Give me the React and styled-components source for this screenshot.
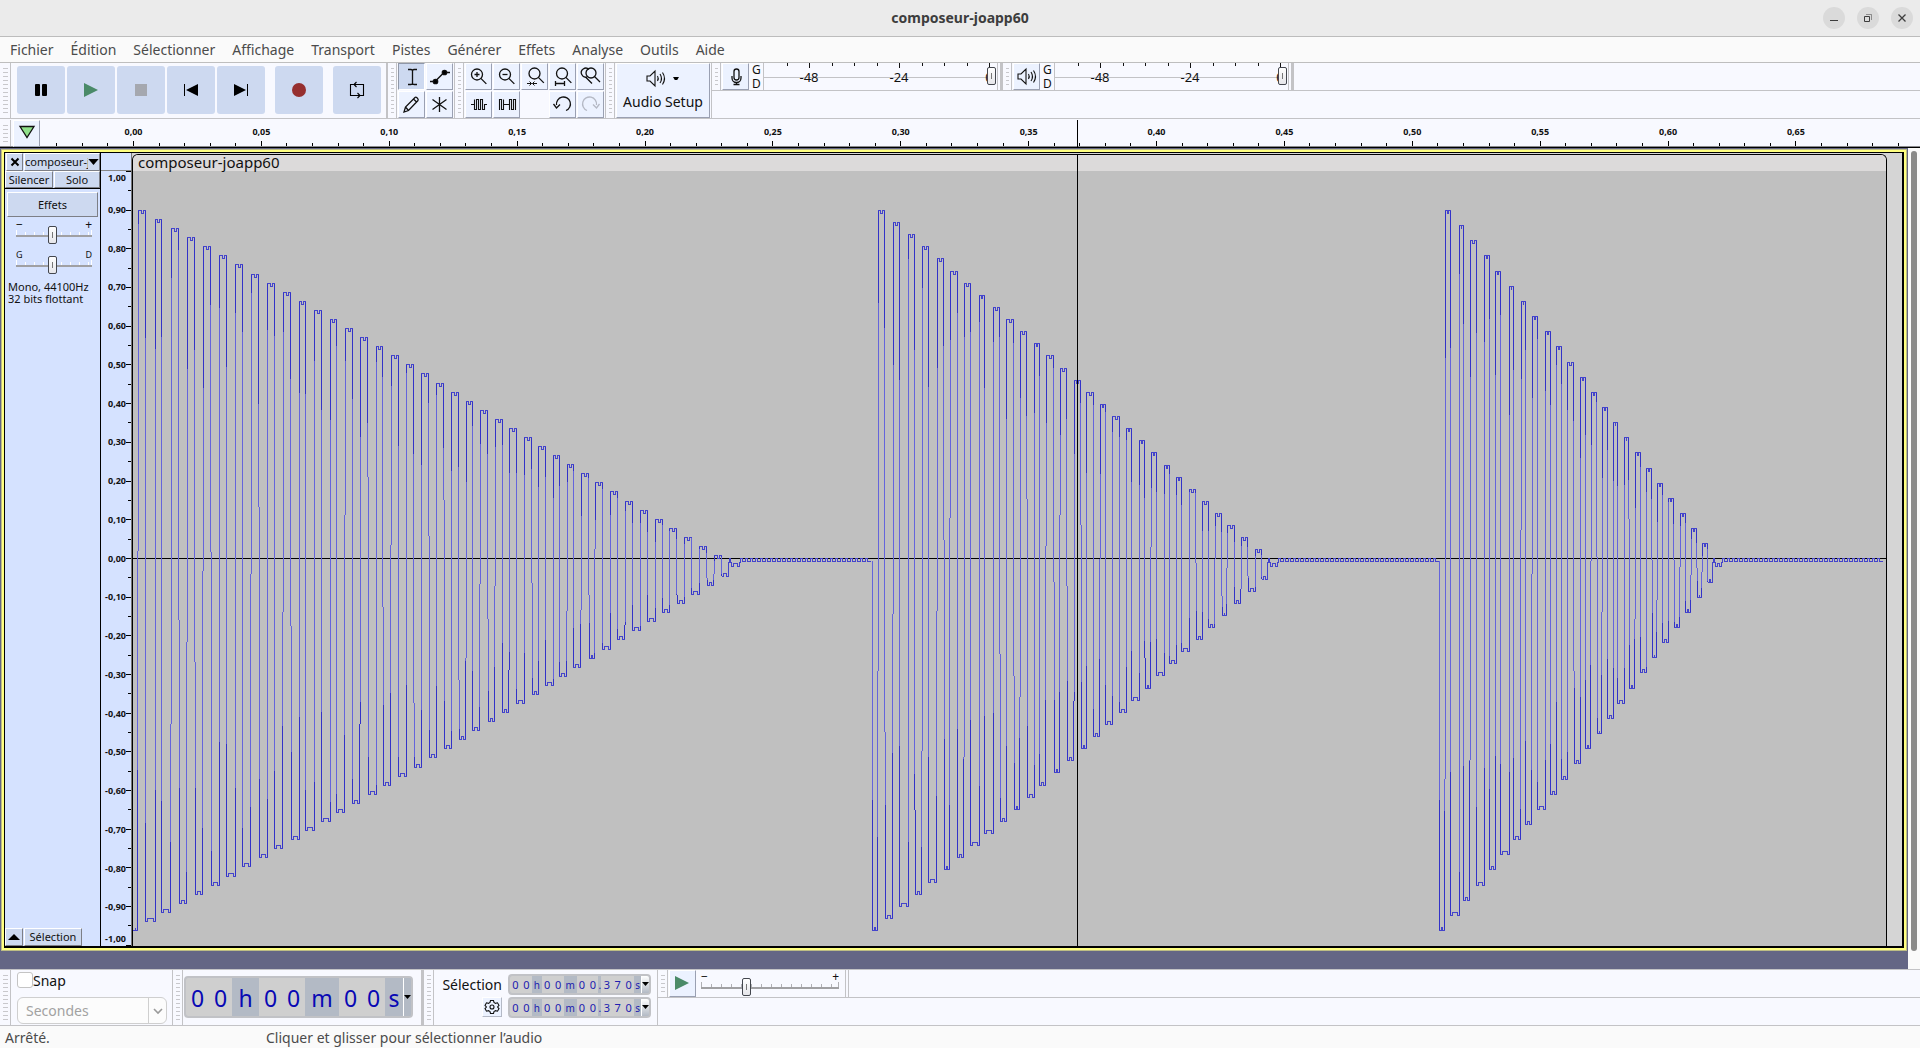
import React from 'react';
import styled, { createGlobalStyle, css } from 'styled-components';

const line = '#c3c3c6';
const panel = '#f8f9ff';
const face = '#ecf2ff';
const pressed = '#cdd9f0';
const sans = '"Noto Sans", "Open Sans", sans-serif';

const Global = createGlobalStyle`
  *, *::before, *::after { box-sizing: border-box; }
  body { margin: 0; background: #fafafa; color: #111; font-family: ${sans}; font-size: 14px; }
  button, input, select { font: inherit; color: inherit; margin: 0; padding: 0; }
  svg { display: block; flex: none; }
`;

const Window = styled.div`
  min-height: 100vh;
  display: grid;
  grid-template-rows: auto auto auto auto minmax(0, 1fr) auto auto;
`;

/* ---------- title and menu ---------- */
const TitleBar = styled.header`
  display: grid;
  grid-template-columns: 1fr auto 1fr;
  align-items: center;
  height: 37px;
  background: #ebebeb;
  border-bottom: 1px solid #bcbcbc;
`;
const Title = styled.h1`
  grid-column: 2;
  margin: 0;
  font-size: 14px;
  line-height: 20px;
  font-weight: 700;
  color: #3d3d3d;
`;
const WindowButtons = styled.div`
  display: flex;
  justify-content: flex-end;
  gap: 12px;
  padding-right: 7px;
`;
const RoundButton = styled.button`
  width: 22px;
  height: 22px;
  border: 0;
  border-radius: 50%;
  background: #dadada;
`;
const MenuBar = styled.nav`
  display: flex;
  gap: 17px;
  height: 26px;
  padding: 0 10px;
  background: #fafafa;
  border-bottom: 1px solid #bebebe;
`;
const MenuButton = styled.button`
  border: 0;
  background: none;
  font-size: 14px;
  line-height: 24px;
  color: #4b4b4b;
`;

/* ---------- docks ---------- */
const Dock = styled.div`
  display: flex;
  min-height: ${p => (p.$top ? 57 : 56)}px;
  background: ${panel};
  border-bottom: 1px solid ${line};
  ${p => p.$top && css`border-top: 1px solid ${line};`}
`;
const Bar = styled.section`
  display: flex;
  padding-right: ${p => p.$pad || 0}px;
  border-right: ${p => p.$edge || 1}px solid ${line};
`;
const Grip = styled.div`
  width: ${p => p.$w || 9}px;
  padding: 5px 2px 4px 3px;
  border-right: 1px solid ${line};
  &::before {
    content: '';
    display: block;
    height: 100%;
    background: repeating-linear-gradient(#c8c8cc 0 1px, transparent 1px 4px);
  }
`;
const Transport = styled.div`
  display: flex;
  gap: 2px;
  padding: 3px 5px 4px 6px;
`;
const BigButton = styled.button`
  width: 48px;
  height: 48px;
  border: 0;
  border-radius: 3px;
  background: ${pressed};
  margin-left: ${p => (p.$apart ? 8 : 0)}px;
`;
const ToolGrid = styled.div`
  display: grid;
  grid-template-columns: repeat(${p => p.$cols}, 27px);
  grid-auto-rows: 27px;
  gap: 1px;
  padding: 0 1px;
`;
const Tool = styled.button`
  display: grid;
  place-items: center;
  width: 27px;
  height: 27px;
  border: 1px solid;
  border-color: ${p => (p.$on ? '#8f97a8 #fff #fff #8f97a8' : '#fff #9aa0b2 #9aa0b2 #fff')};
  background: ${p => (p.$on ? pressed : face)};
`;
const AudioSetup = styled.button`
  display: flex;
  flex-direction: column;
  align-items: center;
  width: 94px;
  height: 55px;
  margin: 0 1px;
  padding: 2px 0 0;
  border: 1px solid;
  border-color: #fff #9aa0b2 #9aa0b2 #fff;
  background: ${face};
  font-size: 14px;
  line-height: 22px;
`;
const Lanes = styled.div`
  flex: 1;
  display: flex;
  flex-direction: column;
`;
const Lane = styled.div`
  display: flex;
  height: 28px;
  border-bottom: 1px solid ${line};
`;
const Channels = styled.div`
  width: 13px;
  padding-left: 2px;
  font-size: 12px;
  line-height: 14px;
`;
const Meter = styled.div`
  position: relative;
  width: 235px;
  overflow: hidden;
  background: linear-gradient(${line}, ${line}) 0 14px / 223px 1px no-repeat;
  border: solid ${line};
  border-width: 0 1px;
`;
const MeterTicks = styled.div`
  display: flex;
  justify-content: space-between;
  width: 203px;
  margin-left: 23px;
  height: 5px;
`;
const MeterTick = styled.i`
  width: 1px;
  height: ${p => (p.$major ? 5 : 3)}px;
  background: #111;
`;
const MeterScale = styled.div`
  display: grid;
  grid-template-columns: repeat(3, 90px);
  font-size: 13px;
  line-height: 18px;
  text-align: center;
`;
const meterThumb = css`
  appearance: none;
  width: 9px;
  height: 18px;
  border: 1px solid #44474e;
  border-radius: 2px;
  background: linear-gradient(#777, #777) 3px 5px / 1px 6px no-repeat, linear-gradient(#fff, #e6e6ea);
`;
const MeterSlider = styled.input`
  position: absolute;
  top: 4px;
  left: 0;
  width: 232px;
  height: 18px;
  appearance: none;
  background: none;
  &::-webkit-slider-thumb { ${meterThumb} }
`;

/* ---------- time ruler ---------- */
const Timeline = styled.div`
  position: relative;
  display: flex;
  height: 29px;
  background: ${panel};
  border-bottom: 1px solid #000;
  box-shadow: inset 0 -1px #8a8a8e;
`;
const PinBar = styled.div`
  display: flex;
  gap: 2px;
  position: absolute;
  inset: 1px auto 1px 0;
`;
const TimeScale = styled.div`
  flex: 1;
  display: grid;
  grid-template-columns: repeat(73, 1fr);
  grid-template-rows: 21px 6px;
  padding: 0 9px 0 44px;
`;
const TimeLabel = styled.span`
  grid-column-end: span 5;
  grid-row: 1;
  padding-top: 7px;
  font-size: 9px;
  line-height: 12px;
  font-weight: 700;
  text-align: center;
`;
const TimeTick = styled.i`
  grid-row: 2;
  justify-self: center;
  align-self: end;
  width: 1px;
  height: ${p => (p.$major ? 5 : 3)}px;
  background: #000;
`;
const Cursor = styled.i`
  position: absolute;
  top: ${p => p.$top || 0}px;
  bottom: 0;
  width: 1px;
  background: #000;
`;

/* ---------- track ---------- */
const Workspace = styled.main`
  display: flex;
  min-height: 500px;
  background: #fafafa;
`;
const TrackArea = styled.div`
  flex: 1;
  display: flex;
  padding: 1px 1px 18px;
  background: #646685;
`;
const Focus = styled.div`
  flex: 1;
  display: flex;
  border: 1px solid #bdbd84;
  background: #ffff80;
  padding: 2px;
`;
const Track = styled.div`
  flex: 1;
  display: flex;
  min-width: 0;
  border: solid #000;
  border-width: 1px 2px 2px 1px;
  background: #d5d5d5;
`;
const ScrollPane = styled.div`
  width: 12px;
  padding: 3px 3px 18px;
`;
const ScrollThumb = styled.div`
  width: 6px;
  height: 100%;
  border-radius: 3px;
  background: #8a8a89;
`;
const Controls = styled.aside`
  width: 96px;
  display: flex;
  flex-direction: column;
  background: #d5e2ff;
  border-right: 1px solid #000;
  font-size: 11px;
`;
const Row = styled.div`
  display: flex;
  gap: 1px;
  padding-left: ${p => p.$pad || 0}px;
  ${p => p.$ruled && css`border-bottom: 1px solid #000;`}
  ${p => p.$last && css`margin-top: auto;`}
`;
const Flat = styled.button`
  display: flex;
  align-items: center;
  justify-content: center;
  height: ${p => p.$h || 18}px;
  ${p => (p.$w ? `width: ${p.$w}px;` : 'flex: 1;')}
  min-width: 0;
  overflow: hidden;
  white-space: nowrap;
  border: 1px solid;
  border-color: #fff #7d7f86 #7d7f86 #fff;
  background: ${pressed};
  font-size: 11px;
  line-height: 14px;
`;
const NameText = styled.span`
  flex: 1;
  overflow: hidden;
  text-align: left;
`;
const Effects = styled.div`
  display: flex;
  padding: 3px 2px 0;
`;
const Gauge = styled.label`
  display: block;
  width: ${p => p.$w}px;
  margin: ${p => p.$m || '0'};
`;
const GaugeEnds = styled.span`
  display: flex;
  justify-content: space-between;
  height: 6px;
  font-size: ${p => p.$size || 12}px;
  line-height: 10px;
`;
const GaugeRail = styled.span`
  display: block;
  height: 18px;
  background:
    linear-gradient(#a0a0a3, #a0a0a3) 0 9px / 100% 2px no-repeat,
    repeating-linear-gradient(90deg, ${p => p.$tick} 0 1px, transparent 1px ${p => p.$step}px) 0 6px / 100% 3px no-repeat,
    linear-gradient(${p => p.$tick}, ${p => p.$tick}) 0 4px / 1px 5px no-repeat,
    linear-gradient(${p => p.$tick}, ${p => p.$tick}) 100% 4px / 1px 5px no-repeat;
`;
const GaugeInput = styled.input`
  display: block;
  width: 100%;
  height: 18px;
  appearance: none;
  background: none;
  &::-webkit-slider-thumb { ${meterThumb} }
`;
const Format = styled.p`
  margin: 7px 3px;
  font-size: 11px;
  line-height: 12px;
`;
const Levels = styled.div`
  width: 31px;
  display: flex;
  flex-direction: column;
  background: #d5e2ff;
  border-right: 1px solid #777;
`;
const LevelsHead = styled.div`
  height: 18px;
  border-bottom: 1px solid #888;
`;
const LevelsBody = styled.div`
  flex: 1;
  display: flex;
`;
const LevelLabels = styled.div`
  flex: 1;
  display: grid;
  grid-template-rows: 1fr repeat(19, 2fr) 1fr;
  align-items: center;
  justify-items: end;
  font-size: 9px;
  line-height: 12px;
  font-weight: 700;
  white-space: nowrap;
  & > :first-child { align-self: start; padding-top: 1px; }
  & > :last-child { align-self: end; padding-bottom: 1px; }
`;
const LevelTicks = styled.div`
  display: flex;
  flex-direction: column;
  align-items: flex-end;
  justify-content: space-between;
  width: 5px;
`;
const LevelTick = styled.i`
  width: ${p => (p.$major ? 5 : 3)}px;
  height: 1px;
  background: #000;
`;
const Clip = styled.div`
  position: relative;
  flex: 1;
  display: flex;
  flex-direction: column;
  min-width: 0;
  margin: 1px 15px 0 0;
  border: solid #000;
  border-width: 1px 1px 0;
  border-radius: 6px 6px 0 0;
  overflow: hidden;
  background: #c0c0c0;
`;
const ClipName = styled.div`
  height: 16px;
  padding-left: 5px;
  background: #dcdada;
  font-size: 15px;
  line-height: 14px;
`;
const WaveBox = styled.div`
  flex: 1;
  min-height: 0;
  & > svg { width: 100%; height: 100%; }
`;

/* ---------- lower dock ---------- */
const SnapBox = styled.div`
  display: flex;
  flex-direction: column;
  gap: 9px;
  width: 161px;
  padding: 2px 5px 0 6px;
`;
const SnapLabel = styled.label`
  display: flex;
  align-items: center;
  height: 16px;
`;
const Check = styled.input`
  appearance: none;
  width: 16px;
  height: 16px;
  border: 1px solid #c4c4c4;
  border-radius: 3px;
  background: #fff;
`;
const Combo = styled.div`
  display: grid;
  grid-template-columns: 131px 19px;
  height: 27px;
  color: #a2a2a2;
  & > select { grid-area: 1 / 1 / 2 / 3; }
  & > svg { grid-area: 1 / 2; place-self: center; pointer-events: none; }
`;
const Select = styled.select`
  appearance: none;
  padding-left: 8px;
  border: 1px solid #cfcfcf;
  border-radius: 6px;
  background: linear-gradient(#cfcfcf, #cfcfcf) 130px 0 / 1px 100% no-repeat, #fcfcfc;
  color: #a2a2a2;
  opacity: 1;
`;
const Clock = styled.div`
  display: flex;
  width: ${p => (p.$big ? 229 : 143)}px;
  height: ${p => (p.$big ? 42 : 21)}px;
  margin: ${p => (p.$big ? '6px 8px 0 1px' : 0)};
  border: 2px solid #c1c2c6;
  border-radius: 4px;
  overflow: hidden;
  background: #b3bac5;
  color: ${p => (p.$big ? '#0808b4' : '#2020b0')};
  font-size: ${p => (p.$big ? 23 : 11)}px;
  line-height: ${p => (p.$big ? 40 : 17)}px;
`;
const Digit = styled.span`
  width: ${p => p.$w}px;
  text-align: center;
  background: #cfcfcf;
`;
const Unit = styled.span`
  width: ${p => p.$w}px;
  text-align: center;
  white-space: nowrap;
  ${p => !p.$big && css`font-size: 10px; line-height: 19px;`}
`;
const ClockMenu = styled.button`
  flex: 1;
  display: grid;
  place-items: center;
  border: 0;
  border-left: 1px solid #fff;
  background: ${p => (p.$light ? 'linear-gradient(#fff, #b3bac5)' : '#b3bac5')};
`;
const SelectionBox = styled.div`
  display: grid;
  grid-template-columns: 62px 143px;
  grid-template-rows: 21px 21px;
  gap: 2px 6px;
  align-content: start;
  justify-items: end;
  padding: 4px 6px 0;
  font-size: 14px;
  line-height: 22px;
`;
const GearButton = styled.button`
  display: grid;
  place-items: center;
  width: 20px;
  height: 20px;
  border: 1px solid;
  border-color: #fff #b4b9c6 #b4b9c6 #fff;
  background: ${face};
`;
const StatusBar = styled.footer`
  display: grid;
  grid-template-columns: 261px 1fr;
  height: 22px;
  padding-left: 5px;
  background: #fafafa;
  color: #4b4b4b;
  font-size: 14px;
  line-height: 23px;
`;

/* ---------- waveform ---------- */
const SEGMENTS = [
  {
    start: 133, step: 9.08, low: 7, dip: 4,
    highs: [[138, 145], [155, 161], [171, 178], [187, 194], [203, 210], [219, 226], [235, 242], [251, 258], [267, 274], [283, 290], [299, 305], [314, 321], [330, 336], [345, 352], [360, 367], [376, 382], [391, 398], [406, 413], [421, 428], [436, 443], [451, 458], [466, 472], [480, 487], [495, 502], [509, 516], [524, 531], [538, 545], [553, 559], [567, 573], [581, 588], [595, 602], [610, 617], [625, 632], [640, 647], [655, 662], [669, 676], [684, 691], [699, 706], [714, 721]],
  },
  {
    start: 872, step: 12.12, low: 6, dip: 3,
    highs: [[878, 884], [893, 899], [908, 914], [922, 928], [937, 943], [950, 957], [964, 970], [979, 984], [993, 999], [1006, 1013], [1020, 1026], [1034, 1039], [1046, 1053], [1060, 1066], [1074, 1080], [1086, 1093], [1100, 1105], [1112, 1119], [1126, 1131], [1139, 1144], [1151, 1156], [1164, 1169], [1176, 1181], [1189, 1195], [1202, 1208], [1215, 1221], [1227, 1234], [1241, 1247], [1255, 1261]],
  },
  {
    start: 1439, step: 15.15, low: 5, dip: 2,
    highs: [[1445, 1450], [1459, 1463], [1470, 1476], [1484, 1489], [1495, 1500], [1509, 1513], [1521, 1525], [1532, 1537], [1545, 1550], [1556, 1561], [1567, 1573], [1580, 1585], [1591, 1596], [1602, 1607], [1613, 1617], [1624, 1628], [1635, 1640], [1646, 1651], [1657, 1662], [1668, 1673], [1680, 1685], [1691, 1696], [1702, 1707]],
  },
];
const WAVE_END = 1886;

function buildWave() {
  const caps = [];
  const dark = [];
  const light = [];
  let seed = 7;
  const rnd = () => {
    seed = (seed * 16807) % 2147483647;
    return seed / 2147483647;
  };
  const v = (list, x, a, b) => b > a && list.push(`M${x + 0.5} ${a}V${b}`);
  // One edge: dark near both peaks, lighter through the middle, sometimes one pixel over lower down.
  const edge = (x, shifted, top, bottom) => {
    const h = bottom - top;
    const a = Math.round(top + h * (0.02 + rnd() * 0.22));
    const b = Math.round(bottom - h * (0.02 + rnd() * 0.22));
    const jog = shifted === x ? b : Math.round(top + h * (0.3 + rnd() * 0.6));
    v(dark, x, top, a);
    v(light, x, a, Math.min(jog, b));
    if (jog > b) v(dark, x, b, jog);
    v(light, shifted, jog, b);
    v(dark, shifted, Math.max(jog, b), bottom);
  };
  SEGMENTS.forEach((s, i) => {
    const topOf = k => Math.round(210 + k * s.step);
    const lowOf = k => Math.round(930 - k * s.step);
    let lowLeft = s.start;
    if (i > 0) {
      v(light, s.start, 561, 800);
      v(dark, s.start, 800, 930);
    }
    s.highs.forEach(([l, r], k) => {
      const t = topOf(k);
      const b = lowOf(k);
      const lowRight = l - (k === 0 || rnd() > 0.6 ? 1 : 0);
      caps.push(`M${lowLeft} ${b + 0.5}H${lowLeft + 2.5}V${b - 2.5}H${lowRight - 1.5}V${b + 0.5}H${lowRight + 1}`);
      edge(l, lowRight, t, b);
      const notch = r - l > 6 ? 3.5 : 2.5;
      caps.push(`M${l} ${t + 0.5}H${l + notch}V${t + 3.5}H${r - 1.5}V${t + 0.5}H${r + 1}`);
      const last = k === s.highs.length - 1;
      lowLeft = r + (!last && rnd() > 0.6 ? 1 : 0);
      edge(r, lowLeft, t, lowOf(k + 1));
    });
    const b = lowOf(s.highs.length);
    let d = `M${lowLeft + 0.5} ${b + 0.5}h2v-3h${s.low - 4}v3h2V562.5h1V558.5h1v4h1v4h2v-3h${s.dip}v3h2v-4h1`;
    const stop = i < 2 ? SEGMENTS[i + 1].start : WAVE_END;
    for (let x = lowLeft + s.low + 8 + s.dip; x < stop - 4; x += 5) d += `M${x + 0.5} 562V558.5h2v3h3`;
    caps.push(d);
  });
  return { caps: caps.join(''), dark: dark.join(''), light: light.join('') };
}
const wave = buildWave();

const Waveform = () => (
  <svg viewBox="133 171 1753 775" preserveAspectRatio="none" fill="none" shapeRendering="crispEdges" role="img" aria-label="composeur-joapp60">
    <path d="M133 558.5H1886" stroke="#000" />
    <path d={wave.light} stroke="#6464dc" />
    <path d={wave.dark} stroke="#3232c8" />
    <path d={wave.caps} stroke="#4444cc" />
  </svg>
);

/* ---------- icons ---------- */
const Icon = ({ s = 24, children, ...rest }) => (
  <svg width={s} height={s} viewBox={`0 0 ${s} ${s}`} fill="none" stroke="#111" strokeWidth="1.3" aria-hidden="true" {...rest}>{children}</svg>
);
const icons = {
  pause: <><rect x="18" y="18" width="5" height="12" rx="1" fill="#000" stroke="none" /><rect x="25" y="18" width="5" height="12" rx="1" fill="#000" stroke="none" /></>,
  play: <path d="M17 17v14l14-7z" fill="#4a8a68" stroke="none" />,
  stop: <path d="M18 18h12v12H18z" fill="#a5a8af" stroke="none" />,
  start: <><path d="M31 18v12l-12-6z" fill="#000" stroke="none" /><path d="M17.500 18v12" stroke="#000" strokeWidth="1" /></>,
  end: <><path d="M17 18v12l12-6z" fill="#000" stroke="none" /><path d="M30.500 18v12" stroke="#000" strokeWidth="1" /></>,
  record: <circle cx="24" cy="24" r="7" fill="#962f2f" stroke="none" />,
  loop: <path d="M20.500 18.500H17.500V29.500H27M24.500 27l2.500 2.500-2.500 2.500M27.500 29.500H30.500V18.500H21M23.500 16l-2.500 2.500 2.500 2.500" stroke="#000" strokeWidth="1.100" />,
};
const glass = (cx, cy, r) => <><circle cx={cx} cy={cy} r={r} /><path d={`M${cx + r * 0.7} ${cy + r * 0.7}l5.500 5.500`} /></>;
const tools = {
  ibeam: <path d="M9 5.500h3q1.500 0 1.500 1.500q0-1.500 1.500-1.500h3M13.500 6v14M9 20.500h3q1.500 0 1.500-1.500q0 1.500 1.500 1.500h3" />,
  envelope: <><path d="M3 17.500h5l9-9h6" /><circle cx="8.500" cy="17.500" r="2.200" fill="#000" /><circle cx="17.500" cy="8.500" r="2.200" fill="#000" /></>,
  pencil: <path d="M5 20l1.500-5L16 5.500c1-1 4 1.500 3 3L9.500 18.500zM14.500 7l3.500 3.500M6.500 15l3 3.500" />,
  star: <path d="M12.500 5v15M5.500 7.500l14 10M19.500 7.500l-14 10" />,
  zoomIn: <>{glass(11, 10.500, 5.500)}<path d="M8.500 10.500h5M11 8v5" /></>,
  zoomOut: <>{glass(11, 10.500, 5.500)}<path d="M8.500 10.500h5" /></>,
  zoomSel: <>{glass(12.500, 9.500, 5.500)}<path d="M5 19.500h4.500M10.500 19.500H15M7.500 17.500l2 2-2 2M12.500 17.500l-2 2 2 2" strokeWidth="1" /></>,
  zoomFit: <>{glass(12, 9.500, 5.500)}<path d="M5 19.500h10M5.500 17v5M14.500 17v5" /></>,
  zoomToggle: <><path d="M9 13a4.500 4.500 0 1 1 2-7.500M8 13.500l6 6" />{glass(13, 9, 5)}</>,
  trim: <path d="M5 12.500h3.500V17.500h2v-10h2v10h2v-10h2v10h2V12.500H21M8.500 12.500V7.500" strokeWidth="1.100" />,
  silence: <path d="M5.500 18V7.500h2v10h2V7.500v10M9.500 12.500h6M15.500 18V7.500h2v10h2V7.500h2V18" strokeWidth="1.100" />,
  undo: <path d="M6.500 13a7 7 0 1 1 9.500 5.500M3.500 12l3 4 3.500-3.500" />,
  redo: <path d="M18.500 13a7 7 0 1 0-9.500 5.500M21.500 12l-3 4-3.500-3.500" stroke="#b4b8c4" />,
  mic: <path d="M11 7.500a2.500 2.500 0 0 1 5 0v6a2.500 2.500 0 0 1-5 0zM9 12v2a4.500 4.500 0 0 0 9 0v-2M13.500 18.500v2M10.500 20.500h6" />,
  speaker: <path d="M4 10v5h3l5 5V5L7 10zM14.500 10q1.500 2.500 0 5M17 8q3 4.500 0 9M19.500 6.500q4 6 0 12" strokeWidth="1.100" />,
};
const Triangle = () => <svg width="7" height="5" viewBox="0 0 7 5" aria-hidden="true"><path d="M0 0h7L3.500 4z" fill="#000" /></svg>;

const ToolButton = ({ name, label, on }) => (
  <Tool type="button" aria-label={label} $on={on}><Icon s={25}>{tools[name]}</Icon></Tool>
);

const LevelMeter = ({ icon, label }) => (
  <Bar $edge={3} $pad={2}>
    <Grip />
    <ToolGrid $cols={1}><ToolButton name={icon} label={label} /></ToolGrid>
    <Channels>G<br />D</Channels>
    <Meter>
      <MeterTicks>{Array.from({ length: 10 }, (_, i) => <MeterTick key={i} $major={i % 4 === 1} />)}</MeterTicks>
      <MeterScale><span>-48</span><span>-24</span><span>0</span></MeterScale>
      <MeterSlider type="range" defaultValue="100" aria-label={label} />
    </Meter>
  </Bar>
);

const GaugeControl = ({ label, ends, width, value, step, tick, margin, size }) => (
  <Gauge $w={width} $m={margin}>
    <GaugeEnds $size={size}><span>{ends[0]}</span><span>{ends[1]}</span></GaugeEnds>
    <GaugeRail $tick={tick} $step={step}><GaugeInput type="range" defaultValue={value} aria-label={label} /></GaugeRail>
  </Gauge>
);

const TimeField = ({ groups, big, label }) => (
  <Clock $big={big} role="group" aria-label={label}>
    {groups.map(([digits, unit, w], i) => (
      <React.Fragment key={i}>
        {digits.split('').map((c, j) => <Digit key={j} $w={big ? 23 : 11}>{c}</Digit>)}
        <Unit $w={w} $big={big}>{unit}</Unit>
      </React.Fragment>
    ))}
    <ClockMenu type="button" aria-label="Format" $light={!big}><Triangle /></ClockMenu>
  </Clock>
);

const fr = n => n.toFixed(2).replace('.', ',');
const MENUS = ['Fichier', 'Édition', 'Sélectionner', 'Affichage', 'Transport', 'Pistes', 'Générer', 'Effets', 'Analyse', 'Outils', 'Aide'];
const BIG = [['pause', 'Pause'], ['play', 'Lecture'], ['stop', 'Arrêter'], ['start', 'Début'], ['end', 'Fin'], ['record', 'Enregistrer'], ['loop', 'Boucle']];
const SMALL_TIME = [['00', 'h', 10], ['00', 'm', 13], ['00', '.', 3], ['370', 's', 7]];

export default function App() {
  return (
    <Window>
      <Global />
      <TitleBar>
        <Title>composeur-joapp60</Title>
        <WindowButtons>
          <RoundButton type="button" aria-label="Réduire"><Icon s={22} stroke="#3d3d3d"><path d="M7 13.500h8" strokeWidth="1" /></Icon></RoundButton>
          <RoundButton type="button" aria-label="Restaurer"><Icon s={22} stroke="#3d3d3d" strokeWidth="1"><path d="M7.500 9.500h5v5h-5z" /><path d="M9 7.500h5.500V13" opacity=".5" /></Icon></RoundButton>
          <RoundButton type="button" aria-label="Fermer"><Icon s={22} stroke="#3d3d3d"><path d="M7.500 7.500l7 7M14.500 7.500l-7 7" /></Icon></RoundButton>
        </WindowButtons>
      </TitleBar>

      <MenuBar>{MENUS.map(m => <MenuButton type="button" key={m}>{m}</MenuButton>)}</MenuBar>

      <Dock>
        <Bar $edge={2}>
          <Grip $w={11} />
          <Transport>
            {BIG.map(([k, label], i) => <BigButton type="button" key={k} aria-label={label} $apart={i > 4}><Icon s={48}>{icons[k]}</Icon></BigButton>)}
          </Transport>
        </Bar>
        <Bar>
          <Grip />
          <ToolGrid $cols={2}>
            <ToolButton name="ibeam" label="Sélection" on />
            <ToolButton name="envelope" label="Enveloppe" />
            <ToolButton name="pencil" label="Dessin" />
            <ToolButton name="star" label="Multi-outils" />
          </ToolGrid>
        </Bar>
        <Bar>
          <Grip />
          <ToolGrid $cols={5}>
            <ToolButton name="zoomIn" label="Zoom avant" />
            <ToolButton name="zoomOut" label="Zoom arrière" />
            <ToolButton name="zoomSel" label="Zoom sélection" />
            <ToolButton name="zoomFit" label="Zoom projet" />
            <ToolButton name="zoomToggle" label="Bascule zoom" />
            <ToolButton name="trim" label="Rogner" />
            <ToolButton name="silence" label="Silence" />
            <span />
            <ToolButton name="undo" label="Annuler" />
            <ToolButton name="redo" label="Refaire" />
          </ToolGrid>
        </Bar>
        <Bar>
          <Grip />
          <AudioSetup type="button">
            <Row>
              <Icon s={25}>{tools.speaker}</Icon>
              <Icon s={14}><path d="M4 11h6l-3 5z" fill="#000" stroke="none" /></Icon>
            </Row>
            Audio Setup
          </AudioSetup>
        </Bar>
        <Lanes>
          <Lane>
            <LevelMeter icon="mic" label="Enregistrement" />
            <LevelMeter icon="speaker" label="Lecture" />
          </Lane>
        </Lanes>
      </Dock>

      <Timeline>
        <TimeScale>
          {Array.from({ length: 14 }, (_, i) => (
            <TimeLabel key={i} style={{ gridColumnStart: 2 + i * 5 }}>{fr(i * 0.05)}</TimeLabel>
          ))}
          {Array.from({ length: 73 }, (_, i) => <TimeTick key={i} $major={i % 5 === 3 && i < 70} />)}
        </TimeScale>
        <PinBar>
          <Grip $w={11} />
          <Tool type="button" aria-label="Tête de lecture"><Icon s={25}><path d="M6 5.500h14l-7 11z" fill="#8fe08a" /></Icon></Tool>
        </PinBar>
        <Cursor $top={1} style={{ left: `${(1077 / 1920) * 100}%` }} />
      </Timeline>

      <Workspace>
        <TrackArea>
          <Focus>
            <Track>
              <Controls>
                <Row $pad={1}>
                  <Flat type="button" $w={17} aria-label="Fermer la piste"><Icon s={10} stroke="#000" strokeWidth="2"><path d="M1.500 1.500l7 7M8.500 1.500l-7 7" /></Icon></Flat>
                  <Flat type="button"><NameText>composeur-joapp60</NameText><svg width="11" height="6" viewBox="0 0 12 7" aria-hidden="true"><path d="M0 0h12L6 7z" fill="#000" /></svg></Flat>
                </Row>
                <Row $ruled>
                  <Flat type="button" $w={48} $h={17}>Silencer</Flat>
                  <Flat type="button" $h={17}>Solo</Flat>
                </Row>
                <Effects><Flat type="button" $h={25}>Effets</Flat></Effects>
                <GaugeControl label="Gain" ends={['−', '+']} width={76} value="48" step={9} tick="#fff" margin="3px 0 0 11px" />
                <GaugeControl label="Panoramique" ends={['G', 'D']} width={76} value="48" step={9} tick="#fff" margin="6px 0 0 11px" size={9} />
                <Format>Mono, 44100Hz<br />32 bits flottant</Format>
                <Row $last>
                  <Flat type="button" $w={18} aria-label="Réduire la piste"><svg width="12" height="6" viewBox="0 0 12 6" aria-hidden="true"><path d="M0 6h12L6 0z" fill="#000" /></svg></Flat>
                  <Flat type="button" $w={58}>Sélection</Flat>
                </Row>
              </Controls>
              <Levels>
                <LevelsHead />
                <LevelsBody>
                  <LevelLabels>
                    {Array.from({ length: 21 }, (_, i) => <span key={i}>{fr((10 - i) / 10)}</span>)}
                  </LevelLabels>
                  <LevelTicks>{Array.from({ length: 41 }, (_, i) => <LevelTick key={i} $major={i % 2 === 0} />)}</LevelTicks>
                </LevelsBody>
              </Levels>
              <Clip>
                <ClipName>composeur-joapp60</ClipName>
                <WaveBox><Waveform /></WaveBox>
                <Cursor style={{ left: `${(944 / 1753) * 100}%` }} />
              </Clip>
            </Track>
          </Focus>
        </TrackArea>
        <ScrollPane><ScrollThumb /></ScrollPane>
      </Workspace>

      <Dock $top>
        <Bar>
          <Grip $w={11} />
          <SnapBox>
            <SnapLabel><Check type="checkbox" />Snap</SnapLabel>
            <Combo>
              <Select disabled aria-label="Snap"><option>Secondes</option></Select>
              <Icon s={10} stroke="#9a9a9a" strokeWidth="1.600"><path d="M1 3l4 4 4-4" /></Icon>
            </Combo>
          </SnapBox>
        </Bar>
        <Bar $edge={3}>
          <Grip $w={10} />
          <TimeField big label="Temps" groups={[['00', 'h', 27], ['00', 'm', 34], ['00', 's', 18]]} />
        </Bar>
        <Bar>
          <Grip $w={10} />
          <SelectionBox>
            <span>Sélection</span>
            <TimeField label="Début de sélection" groups={SMALL_TIME} />
            <GearButton type="button" aria-label="Options de sélection">
              <Icon s={16} strokeWidth="1.100"><circle cx="8" cy="8" r="2" /><path d="M6.500 1.500h3l.5 2 1.500.9 2-.6 1.500 2.600-1.400 1.600 1.400 1.600-1.500 2.600-2-.6-1.500.9-.5 2h-3l-.5-2-1.500-.9-2 .6L1 9.600 2.400 8 1 6.400l1.500-2.600 2 .6L6 3.500z" /></Icon>
            </GearButton>
            <TimeField label="Fin de sélection" groups={SMALL_TIME} />
          </SelectionBox>
        </Bar>
        <Lanes>
          <Lane>
            <Bar $edge={1}>
              <Grip $w={10} />
              <ToolGrid $cols={1}><Tool type="button" aria-label="Lecture à vitesse"><Icon s={25}><path d="M5 5v14l14-7z" fill="#4a8a68" stroke="none" /></Icon></Tool></ToolGrid>
              <GaugeControl label="Vitesse" ends={['−', '+']} width={138} value="32" step={10} tick="#b0b0b4" margin="2px 6px 0 4px" />
            </Bar>
            <Bar $pad={2} />
          </Lane>
        </Lanes>
      </Dock>

      <StatusBar>
        <span>Arrêté.</span>
        <span>Cliquer et glisser pour sélectionner l’audio</span>
      </StatusBar>
    </Window>
  );
}
